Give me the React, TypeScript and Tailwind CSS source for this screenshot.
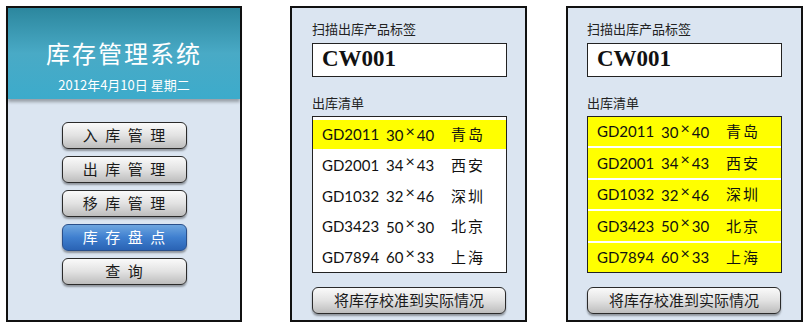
import React from 'react';

const cjk = "font-['Noto_Sans_CJK_SC','Noto_Sans',sans-serif]";

interface Item {
  code: string;
  w: string;
  h: string;
  city: string;
}

const items: Item[] = [
  { code: 'GD2011', w: '30', h: '40', city: '青岛' },
  { code: 'GD2001', w: '34', h: '43', city: '西安' },
  { code: 'GD1032', w: '32', h: '46', city: '深圳' },
  { code: 'GD3423', w: '50', h: '30', city: '北京' },
  { code: 'GD7894', w: '60', h: '33', city: '上海' },
];

const menu = ['入 库 管 理', '出 库 管 理', '移 库 管 理', '库 存 盘 点', '查 询'];

function ItemText({ item }: { item: Item }) {
  return (
    <div className="flex items-center text-[15px] text-[#111] font-['Lato','Noto_Sans_CJK_SC',sans-serif]">
      <span className="w-[64px]">{item.code}</span>
      <span className="w-[65px]">
        {item.w}
        <span className="relative -top-[4px] mx-[2px] text-[16px]">×</span>
        {item.h}
      </span>
      <span className={`${cjk} tracking-[2px]`}>{item.city}</span>
    </div>
  );
}

function GrayButton({ label, className }: { label: string; className?: string }) {
  return (
    <div
      className={`flex h-[27px] items-center justify-center rounded-[6px] border border-[#2a2a2a] bg-gradient-to-b from-[#fafafa] via-[#e2e2e2] to-[#bdbdbd] text-[15px] text-[#1a1a1a] shadow-[0_2px_2px_rgba(0,0,0,0.35)] ${cjk} ${className ?? ''}`}
    >
      {label}
    </div>
  );
}

function ScanPanel({ allYellow, pad }: { allYellow: boolean; pad: string }) {
  return (
    <div className={`flex h-[316px] w-[237px] flex-col border-2 border-[#111] bg-[#dbe5f1] ${pad}`}>
      <div className={`mt-[11px] text-[13px] text-[#222] ${cjk}`}>扫描出库产品标签</div>
      <div className="mt-[4px] flex h-[34px] w-[195px] items-center border border-[#222] bg-white pl-[9px] text-[23px] font-bold text-[#111] font-['Liberation_Serif',serif]">
        CW001
      </div>
      <div className={`mt-[16px] text-[13px] text-[#222] ${cjk}`}>出库清单</div>
      {allYellow ? (
        <div className="mt-[4px] flex h-[157px] w-[195px] flex-col gap-[2px] border border-[#222] bg-white">
          {items.map((item) => (
            <div key={item.code} className="flex flex-1 items-center bg-[#ffff00] pl-[9px]">
              <ItemText item={item} />
            </div>
          ))}
        </div>
      ) : (
        <div className="mt-[4px] flex h-[157px] w-[195px] flex-col border border-[#222] bg-white pt-[3px]">
          {items.map((item, i) => (
            <div
              key={item.code}
              className={`flex h-[30px] items-center pl-[9px] ${i === 0 ? 'bg-[#ffff00]' : 'mt-[1.5px]'}`}
            >
              <ItemText item={item} />
            </div>
          ))}
        </div>
      )}
      <GrayButton label="将库存校准到实际情况" className="mt-[14px] w-[194px]" />
    </div>
  );
}

export default function App() {
  return (
    <div className="flex h-[329px] w-[809px] bg-white pl-[6px] pt-[6px]">
      {/* main menu panel */}
      <div className="flex h-[316px] w-[236px] flex-col border-2 border-[#111] bg-[#dbe5f1]">
        <div className="flex h-[91px] flex-col items-center bg-gradient-to-b from-[#2c879e] via-[#49aac6] to-[#3cabcb] shadow-[0_3px_3px_rgba(0,0,0,0.3)]">
          <div className={`mt-[27px] text-[24px] tracking-[2px] text-white ${cjk}`}>库存管理系统</div>
          <div className={`mt-[4px] text-[13px] text-white ${cjk}`}>2012年4月10日 星期二</div>
        </div>
        <div className="mt-[23px] flex flex-col items-center gap-[7px]">
          {menu.map((m, i) =>
            i === 3 ? (
              <div
                key={m}
                className={`flex h-[27px] w-[125px] items-center justify-center rounded-[6px] border border-[#2a4f8a] bg-gradient-to-b from-[#6ea6e0] via-[#3f7fcf] to-[#2a63b4] text-[15px] text-white shadow-[0_2px_2px_rgba(0,0,0,0.35)] ${cjk}`}
              >
                {m.split(' ').join('\u2002')}
              </div>
            ) : (
              <GrayButton key={m} label={m.split(' ').join('\u2002')} className="w-[125px]" />
            )
          )}
        </div>
      </div>

      <div className="ml-[48px]">
        <ScanPanel allYellow={false} pad="pl-[20px]" />
      </div>

      <div className="ml-[39px]">
        <ScanPanel allYellow={true} pad="pl-[19px]" />
      </div>
    </div>
  );
}
